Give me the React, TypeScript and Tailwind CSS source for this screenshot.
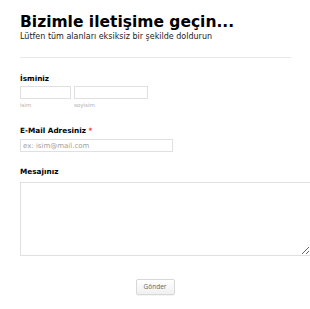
import React from 'react'

function App() {
  return (
    <div className="w-[310px] h-[309px] overflow-hidden bg-white font-['DejaVu_Sans',sans-serif] text-black">
      <div className="pl-[20px] pt-[15px]">
        <h1 className="text-[15.5px] leading-[14px] font-bold">Bizimle iletişime geçin...</h1>
        <p className="mt-[4px] text-[8px] leading-[8px] text-[#222]">Lütfen tüm alanları eksiksiz bir şekilde doldurun</p>

        <div className="mt-[16px] w-[271px] border-t border-[#e8e8e8]" />

        <form action="">
          <label className="mt-[16px] block text-[7.3px] leading-[9px] font-bold">İsminiz</label>
          <div className="mt-[3px] flex gap-[3px]">
            <div className="flex flex-col">
              <input type="text" className="h-[13px] w-[51px] border border-[#e0e0e0] outline-none" />
              <span className="mt-[3px] text-[5.5px] leading-[7px] text-[#b0b0b0]">isim</span>
            </div>
            <div className="flex flex-col">
              <input type="text" className="h-[13px] w-[74px] border border-[#e0e0e0] outline-none" />
              <span className="mt-[3px] text-[5.5px] leading-[7px] text-[#b0b0b0]">soyisim</span>
            </div>
          </div>

          <label className="mt-[17px] block text-[7.3px] leading-[9px] font-bold">
            E-Mail Adresiniz <span className="text-[#e53935]">*</span>
          </label>
          <input
            type="text"
            placeholder="ex: isim@mail.com"
            className="mt-[4px] block h-[13px] w-[153px] border border-[#e0e0e0] px-[2px] text-[7px] outline-none placeholder:text-[#a0a0a0]"
          />

          <label className="mt-[15px] block text-[7.3px] leading-[9px] font-bold">Mesajınız</label>
          <textarea className="mt-[6px] block h-[74px] w-[291px] border border-[#e0e0e0] outline-none" />
        </form>
      </div>

      <div className="mt-[23px] flex justify-center">
        <button className="h-[16px] w-[39px] rounded-[2px] border border-[#d8d8d8] bg-gradient-to-b from-white to-[#f0f0f0] font-['Open_Sans',sans-serif] text-[6.5px] text-[#666] shadow-[0_1px_1px_rgba(0,0,0,0.05)]">
          Gönder
        </button>
      </div>
    </div>
  )
}

export default App
